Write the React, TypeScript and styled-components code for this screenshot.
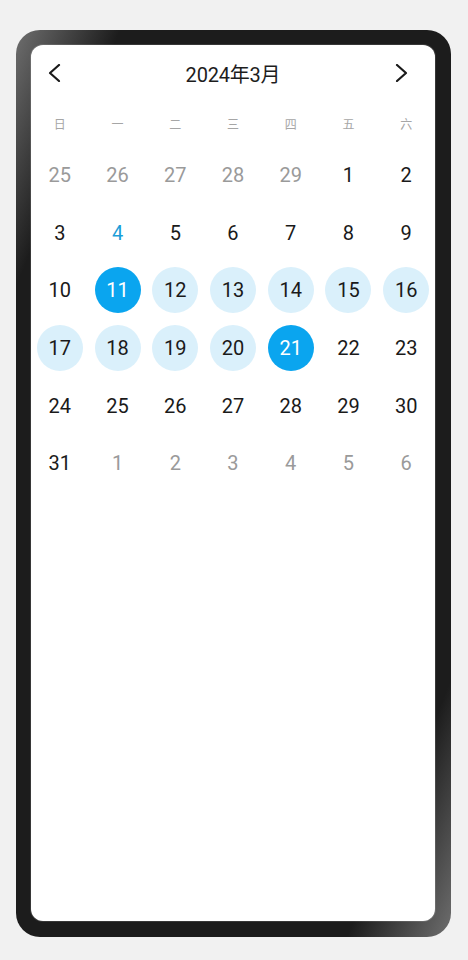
import React from "react";
import styled, { createGlobalStyle } from "styled-components";

const Global = createGlobalStyle`
  html, body { margin: 0; padding: 0; background: #f1f1f1; }
  body { font-family: Roboto, "Noto Sans", "Noto Sans CJK SC", sans-serif; }
`;

const Frame = styled.div`
  box-sizing: border-box;
  margin: 30px 17px 0 16px;
  width: 435px;
  height: 907px;
  padding: 15px 16px 16px 15px;
  border-radius: 24px;
  background: linear-gradient(112deg, #6e6e6e 0%, #1c1c1c 13%, #1c1c1c 87%, #6e6e6e 100%);
  display: flex;
`;

const Screen = styled.div`
  flex: 1;
  background: #fff;
  border-radius: 12px;
  display: flex;
  flex-direction: column;
  overflow: hidden;
  box-shadow: 0 0 0 1px rgba(255, 255, 255, 0.12);
`;

const Header = styled.div`
  height: 56px;
  display: flex;
  align-items: center;
  justify-content: space-between;
  padding: 0 22px 0 12px;
`;

const NavButton = styled.button`
  width: 24px;
  height: 24px;
  border: 0;
  padding: 0;
  background: transparent;
  display: flex;
  align-items: center;
  justify-content: center;
  color: #1a1a1a;
`;

const Title = styled.div`
  font-family: Roboto, "Noto Sans CJK SC", sans-serif;
  font-size: 20px;
  color: #1d1d1d;
  letter-spacing: -0.2px;
  margin-left: 10px;
`;

const WeekRow = styled.div`
  height: 45px;
  display: grid;
  grid-template-columns: repeat(7, 1fr);
  align-items: center;
`;

const WeekDay = styled.div`
  text-align: center;
  font-family: "Noto Sans CJK SC", sans-serif;
  font-size: 12px;
  color: #a6a6a6;
`;

const Grid = styled.div`
  display: grid;
  grid-template-columns: repeat(7, 1fr);
  grid-auto-rows: 57.7px;
`;

type Kind = "other" | "normal" | "today" | "selected" | "range";

const Cell = styled.div`
  display: flex;
  align-items: center;
  justify-content: center;
`;

const Day = styled.div<{ $kind: Kind }>`
  width: 46px;
  height: 46px;
  border-radius: 50%;
  display: flex;
  align-items: center;
  justify-content: center;
  font-family: Roboto, sans-serif;
  font-size: 20px;
  background: ${(p) =>
    p.$kind === "selected" ? "#0aa5ef" : p.$kind === "range" ? "#daf0fb" : "transparent"};
  color: ${(p) =>
    p.$kind === "other"
      ? "#9a9a9a"
      : p.$kind === "today"
      ? "#1c9ed8"
      : p.$kind === "selected"
      ? "#ffffff"
      : "#1a1a1a"};
`;

const Chevron = ({ dir }: { dir: "left" | "right" }) => (
  <svg width="14" height="18" viewBox="0 0 14 18" fill="none">
    <polyline
      points={dir === "left" ? "11,1 2,9 11,17" : "3,1 12,9 3,17"}
      stroke="currentColor"
      strokeWidth="2.2"
      strokeLinecap="round"
      strokeLinejoin="round"
    />
  </svg>
);

const weekDays = ["日", "一", "二", "三", "四", "五", "六"];

type D = { n: number; k: Kind };

const days: D[] = [];
[25, 26, 27, 28, 29].forEach((n) => days.push({ n, k: "other" }));
for (let n = 1; n <= 31; n++) {
  let k: Kind = "normal";
  if (n === 4) k = "today";
  if (n === 11 || n === 21) k = "selected";
  if (n > 11 && n < 21) k = "range";
  days.push({ n, k });
}
[1, 2, 3, 4, 5, 6].forEach((n) => days.push({ n, k: "other" }));

export default function App() {
  return (
    <>
      <Global />
      <Frame>
        <Screen>
          <Header>
            <NavButton aria-label="上一月">
              <Chevron dir="left" />
            </NavButton>
            <Title>2024年3月</Title>
            <NavButton aria-label="下一月">
              <Chevron dir="right" />
            </NavButton>
          </Header>
          <WeekRow>
            {weekDays.map((w) => (
              <WeekDay key={w}>{w}</WeekDay>
            ))}
          </WeekRow>
          <Grid>
            {days.map((d, i) => (
              <Cell key={i}>
                <Day $kind={d.k}>{d.n}</Day>
              </Cell>
            ))}
          </Grid>
        </Screen>
      </Frame>
    </>
  );
}
